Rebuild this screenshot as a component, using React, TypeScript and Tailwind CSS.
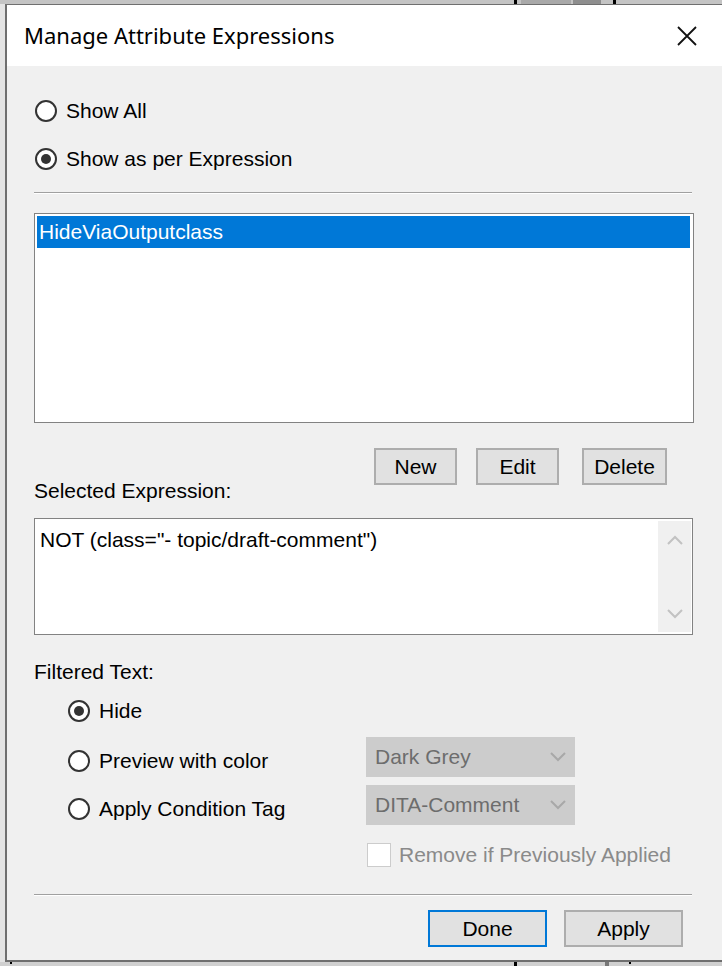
import React from "react";

const sans = { fontFamily: '"Liberation Sans", Arial, sans-serif' };

function Radio({ checked }: { checked?: boolean }) {
  return (
    <div className="w-[22px] h-[22px] rounded-full border-2 border-[#333333] bg-white flex items-center justify-center shrink-0">
      {checked && <div className="w-[10px] h-[10px] rounded-full bg-[#333333]" />}
    </div>
  );
}

function Chevron({ up, color }: { up?: boolean; color: string }) {
  return (
    <svg width="16" height="10" viewBox="0 0 16 10">
      <polyline
        points={up ? "1,9 8,2 15,9" : "1,1 8,8 15,1"}
        fill="none"
        stroke={color}
        strokeWidth="2"
      />
    </svg>
  );
}

function Btn({ label, w, primary }: { label: string; w: number; primary?: boolean }) {
  return (
    <div
      className={
        "h-[37px] flex items-center justify-center bg-[#e1e1e1] text-[21px] text-black border-2 " +
        (primary ? "border-[#0078d7]" : "border-[#adadad]")
      }
      style={{ width: w }}
    >
      {label}
    </div>
  );
}

function Combo({ label }: { label: string }) {
  return (
    <div className="w-[209px] h-[40px] bg-[#cccccc] flex items-center justify-between pl-[9px] pr-[9px] text-[21px] text-[#6d6d6d]">
      <span>{label}</span>
      <Chevron color="#a8a8a8" />
    </div>
  );
}

function Separator({ w }: { w: number }) {
  return (
    <div style={{ width: w }}>
      <div className="h-[1px] bg-[#a0a0a0]" />
      <div className="h-[1px] bg-white" />
    </div>
  );
}

export default function App() {
  return (
    <div className="w-[722px] h-[966px] overflow-hidden bg-[#e4e4e4] flex flex-col" style={sans}>
      <div className="h-[4px] shrink-0 bg-[#c4c4c4] flex">
        <div className="ml-[514px] w-[3px] bg-black" />
        <div className="ml-[4px] w-[50px] bg-[#a9a9a9]" />
        <div className="ml-[2px] w-[28px] bg-[#8e8e8e]" />
        <div className="ml-[12px] w-[3px] bg-black" />
      </div>
      <div className="ml-[5px] w-[740px] h-[958px] shrink-0 border-l-2 border-t border-b-2 border-[#6f6f6f] bg-[#f0f0f0] flex flex-col">
        {/* title bar */}
        <div className="h-[61px] bg-white flex items-center justify-between pl-[17px] pr-[24px] w-[715px]">
          <span className="text-[22px] text-black" style={{ fontFamily: '"Noto Sans", "Open Sans", sans-serif' }}>
            Manage Attribute Expressions
          </span>
          <svg width="22" height="22" viewBox="0 0 22 22">
            <path d="M2 2 L20 20 M20 2 L2 20" stroke="#111" strokeWidth="1.8" />
          </svg>
        </div>

        {/* content */}
        <div className="pl-[27px] flex flex-col text-[21px] text-black leading-[24px]">
          <div className="mt-[33px] h-[24px] flex items-center pl-[1px] gap-[9px]">
            <Radio />
            <span>Show All</span>
          </div>
          <div className="mt-[24px] h-[24px] flex items-center pl-[1px] gap-[9px]">
            <Radio checked />
            <span>Show as per Expression</span>
          </div>
          <div className="mt-[21px]">
            <Separator w={658} />
          </div>

          {/* list box */}
          <div className="mt-[19px] w-[660px] h-[210px] bg-white border border-[#828282] p-[2px]">
            <div className="h-[32px] w-[653px] bg-[#0078d7] text-white flex items-center pl-[2px]">
              HideViaOutputclass
            </div>
          </div>

          {/* buttons */}
          <div className="mt-[25px] flex pl-[340px]">
            <Btn label="New" w={83} />
            <div className="ml-[19px]">
              <Btn label="Edit" w={83} />
            </div>
            <div className="ml-[23px]">
              <Btn label="Delete" w={85} />
            </div>
          </div>

          <div className="mt-[-6px] h-[24px]">Selected Expression:</div>

          {/* expression box */}
          <div className="mt-[15px] w-[659px] h-[117px] bg-white border border-[#828282] flex justify-between pt-[2px] pr-[1px] pb-[2px]">
            <div className="pl-[5px] pt-[7px]">NOT (class="- topic/draft-comment")</div>
            <div className="w-[33px] h-full bg-[#f0f0f0] flex flex-col items-center justify-between pt-[14px] pb-[13px]">
              <Chevron up color="#c2c2c2" />
              <Chevron color="#c2c2c2" />
            </div>
          </div>

          <div className="mt-[25px] h-[24px]">Filtered Text:</div>

          <div className="flex">
            <div className="w-[332px] flex flex-col pl-[34px]">
              <div className="mt-[15px] h-[24px] flex items-center gap-[9px]">
                <Radio checked />
                <span>Hide</span>
              </div>
              <div className="mt-[26px] h-[24px] flex items-center gap-[9px]">
                <Radio />
                <span>Preview with color</span>
              </div>
              <div className="mt-[24px] h-[24px] flex items-center gap-[9px]">
                <Radio />
                <span>Apply Condition Tag</span>
              </div>
            </div>
            <div className="flex flex-col">
              <div className="mt-[53px]">
                <Combo label="Dark Grey" />
              </div>
              <div className="mt-[8px]">
                <Combo label="DITA-Comment" />
              </div>
              <div className="mt-[18px] h-[24px] flex items-center gap-[8px] pl-[1px]">
                <div className="w-[24px] h-[24px] bg-white border border-[#cccccc]" />
                <span className="text-[#8a8a8a]">Remove if Previously Applied</span>
              </div>
            </div>
          </div>

          <div className="mt-[27px]">
            <Separator w={658} />
          </div>

          <div className="mt-[14px] flex pl-[394px]">
            <Btn label="Done" w={119} primary />
            <div className="ml-[17px]">
              <Btn label="Apply" w={119} />
            </div>
          </div>
        </div>
      </div>
      <div className="flex h-[6px] bg-[#d0d0d0]">
        <div className="ml-[10px] w-[2px] h-[2px] bg-black" />
        <div className="ml-[502px] w-[3px] bg-black" />
        <div className="ml-[88px] w-[4px] bg-[#777]" />
        <div className="ml-[20px] w-[2px] h-[2px] bg-black" />
      </div>
    </div>
  );
}
